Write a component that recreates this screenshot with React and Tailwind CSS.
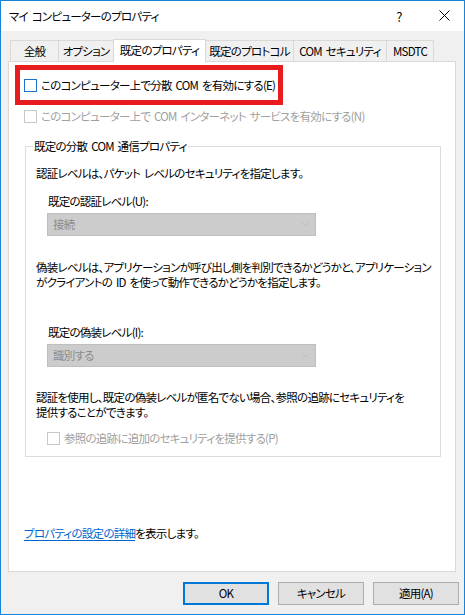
import { ChevronDown } from "lucide-react";

const font = "[font-family:'Noto_Sans_CJK_JP',sans-serif] [font-feature-settings:'palt'] tracking-[-0.75px] [word-spacing:2px]";

const tabs = [
  { label: "全般", w: "w-[49px]" },
  { label: "オプション", w: "w-[56px]" },
  { label: "既定のプロパティ", w: "w-[93px]", active: true },
  { label: "既定のプロトコル", w: "w-[89px]" },
  { label: "COM セキュリティ", w: "w-[94px]" },
  { label: "MSDTC", w: "w-[48px]" },
];

function Checkbox({ focused }) {
  return (
    <span
      className={`block shrink-0 w-[13px] h-[13px] bg-white border ${
        focused ? "border-[#1c73cf]" : "border-[#c8c8c8]"
      }`}
    />
  );
}

function Combo({ value }) {
  return (
    <div className="ml-[21px] w-[269px] h-[23px] bg-[#cccccc] border border-[#bfbfbf] flex items-center justify-between pl-[5px] pr-[4px] text-[#8c8c8c]">
      <span>{value}</span>
      <ChevronDown className="w-[11px] h-[11px] text-[#a8a8a8]" strokeWidth={1.2} />
    </div>
  );
}

export default function App() {
  return (
    <div className={`w-[465px] h-[615px] border border-[#1883d7] bg-[#f0f0f0] flex flex-col text-[11.5px] leading-[15px] text-black ${font}`}>
      {/* Title bar */}
      <div className="h-[30px] bg-white flex items-center pl-[8px] pr-[14px] shrink-0">
        <span className="flex-1">マイ コンピューターのプロパティ</span>
        <span className="w-[12px] text-center mr-[34px] text-[13px]">?</span>
        <svg width="11" height="11" viewBox="0 0 11 11" className="mb-[1px]">
          <path d="M0.5 0.5 L10.5 10.5 M10.5 0.5 L0.5 10.5" stroke="#000" strokeWidth="1" />
        </svg>
      </div>

      <div className="flex-1 flex flex-col px-[7px]">
        {/* Tabs */}
        <div className="mt-[8px] ml-[2px] h-[22px] flex items-end">
          {tabs.map((t, i) => (
            <div
              key={t.label}
              className={`${t.w} ${i > 0 ? "-ml-px" : ""} flex items-center justify-center border border-b-0 border-[#d9d9d9] whitespace-nowrap ${
                t.active
                  ? "h-[23px] bg-white relative z-10 -mb-px pb-[2px]"
                  : "h-[21px] bg-[#f0f0f0]"
              }`}
            >
              {t.label}
            </div>
          ))}
        </div>

        {/* Panel */}
        <div className="w-[448px] h-[511px] bg-white border border-[#d9d9d9] flex flex-col">
          <div className="mt-[3px] ml-[6px] w-[268px] h-[40px] border-[5px] border-[#e81c1c] flex items-center gap-[4px] pl-[4px] pt-[1px]">
            <Checkbox focused />
            <span className="whitespace-nowrap">このコンピューター上で分散 COM を有効にする(E)</span>
          </div>

          <div className="mt-[3px] ml-[15px] h-[16px] flex items-center gap-[4px] text-[#a0a0a0]">
            <Checkbox />
            <span className="whitespace-nowrap">このコンピューター上で COM インターネット サービスを有効にする(N)</span>
          </div>

          <fieldset className="mt-[15px] ml-[16px] w-[416px] h-[318px] border border-[#dcdcdc] pl-[10px]">
            <legend className="ml-[-3px] px-[1px]">既定の分散 COM 通信プロパティ</legend>
            <div className="mt-[12px] whitespace-nowrap">認証レベルは、パケット レベルのセキュリティを指定します。</div>
            <div className="mt-[13px] ml-[12px]">既定の認証レベル(U):</div>
            <div className="-ml-[10px] mt-[4px]">
              <Combo value="接続" />
            </div>
            <div className="mt-[24px] whitespace-nowrap">
              偽装レベルは、アプリケーションが呼び出し側を判別できるかどうかと、アプリケーション
              <br />
              がクライアントの ID を使って動作できるかどうかを指定します。
            </div>
            <div className="mt-[35px] ml-[12px]">既定の偽装レベル(I):</div>
            <div className="-ml-[10px] mt-[4px]">
              <Combo value="識別する" />
            </div>
            <div className="mt-[23px] whitespace-nowrap">
              認証を使用し、既定の偽装レベルが匿名でない場合、参照の追跡にセキュリティを
              <br />
              提供することができます。
            </div>
            <div className="mt-[11px] ml-[11px] h-[15px] flex items-center gap-[4px] text-[#a0a0a0]">
              <Checkbox />
              <span className="whitespace-nowrap">参照の追跡に追加のセキュリティを提供する(P)</span>
            </div>
          </fieldset>

          <div className="mt-auto mb-[30px] ml-[15px]">
            <a href="#" className="text-[#0066cc] underline underline-offset-2">プロパティの設定の詳細</a>
            <span>を表示します。</span>
          </div>
        </div>

        {/* Buttons */}
        <div className="mt-[10px] flex justify-end gap-[9px] -mr-[2px]">
          <button className="w-[86px] h-[23px] bg-[#e1e1e1] border-2 border-[#0078d7]">OK</button>
          <button className="w-[86px] h-[23px] bg-[#e1e1e1] border border-[#adadad]">キャンセル</button>
          <button className="w-[86px] h-[23px] bg-[#e1e1e1] border border-[#adadad]">適用(A)</button>
        </div>
      </div>
    </div>
  );
}
